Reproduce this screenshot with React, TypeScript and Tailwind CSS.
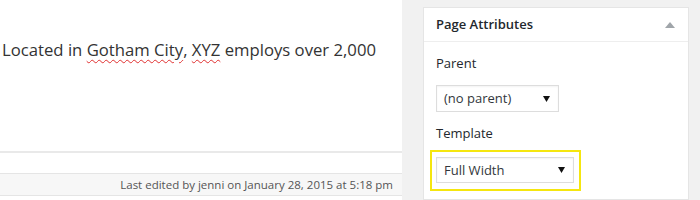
import React from "react";

const font = { fontFamily: '"Open Sans", "Noto Sans", sans-serif' };

function Select({ label, w, h }: { label: string; w: string; h: string }) {
  return (
    <div
      className={`${w} ${h} border border-[#dddddd] bg-white flex items-center justify-between pl-[7px] pr-[8px] shadow-[inset_0_1px_2px_rgba(0,0,0,0.05)]`}
    >
      <span className="text-[13px] text-[#32373c] leading-none">{label}</span>
      <svg width="7" height="6" viewBox="0 0 7 6">
        <path d="M0 0 L7 0 L3.5 6 Z" fill="#111" />
      </svg>
    </div>
  );
}

export default function App() {
  return (
    <div className="w-[700px] h-[200px] bg-[#f1f1f1] flex overflow-hidden" style={font}>
      <div className="w-[402px] h-full bg-white flex flex-col">
        <div className="h-[151px] pt-[38px] pl-[2px]">
          <p className="text-[16.7px] leading-[24px] text-[#333333]">
            Located in{" "}
            <span className="underline decoration-wavy decoration-[#e03030] decoration-[1px] underline-offset-[3px]">
              Gotham City
            </span>
            ,{" "}
            <span className="underline decoration-wavy decoration-[#e03030] decoration-[1px] underline-offset-[3px]">
              XYZ
            </span>{" "}
            employs over 2,000
          </p>
        </div>
        <div className="h-[2px] bg-[#e9e9e9]" />
        <div className="h-[20px]" />
        <div className="h-[23px] border-y border-[#e5e5e5] bg-[#f7f7f7] flex items-center justify-end pr-[9px]">
          <span className="text-[11.5px] text-[#555555] leading-none">
            Last edited by jenni on January 28, 2015 at 5:18 pm
          </span>
        </div>
      </div>
      <div className="w-[21px]" />
      <div className="w-[266px] mt-[7px] bg-white border border-[#e5e5e5] flex flex-col">
        <div className="h-[34px] border-b border-[#eeeeee] flex items-center justify-between pl-[12px] pr-[13px]">
          <span className="text-[13px] font-semibold text-[#23282d]">Page Attributes</span>
          <svg width="10" height="6" viewBox="0 0 10 6">
            <path d="M0 6 L5 0 L10 6 Z" fill="#a0a5aa" />
          </svg>
        </div>
        <div className="pl-[12px] flex flex-col">
          <div className="mt-[12px] h-[20px] flex items-center text-[13px] text-[#23282d]">Parent</div>
          <div className="mt-[11px]">
            <Select label="(no parent)" w="w-[123px]" h="h-[27px]" />
          </div>
          <div className="mt-[12px] h-[20px] flex items-center text-[13px] text-[#23282d]">Template</div>
          <div className="mt-[6px] -ml-[6px] w-[151px] border-2 border-[#f5e60f] px-[4px] pt-[5px] pb-[6px]">
            <Select label="Full Width" w="w-[138px]" h="h-[26px]" />
          </div>
        </div>
      </div>
    </div>
  );
}
